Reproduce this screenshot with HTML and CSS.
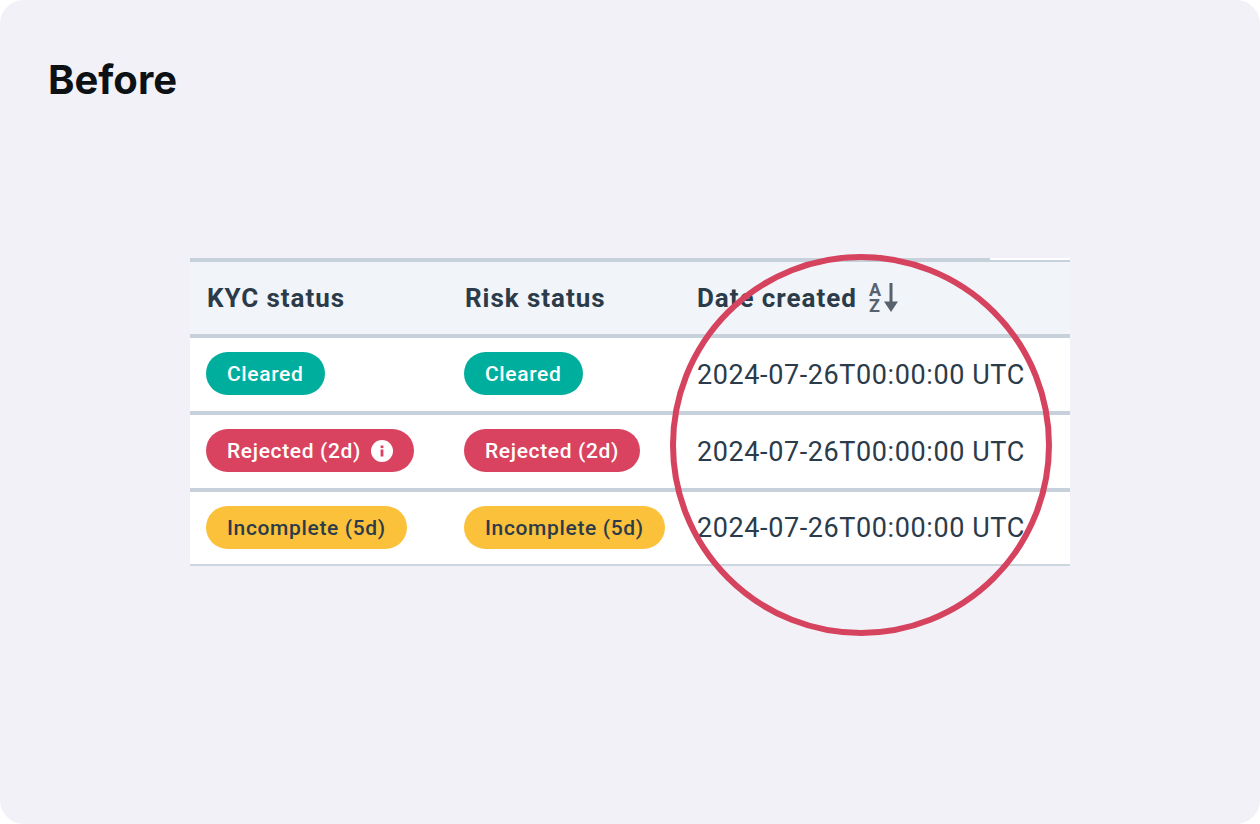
FILE: index.html
```html
<!DOCTYPE html>
<html lang="en">
<head>
<meta charset="utf-8">
<title>Before</title>
<link rel="stylesheet" href="styles.css">
</head>
<body>
<main class="card">
  <h1 class="title">Before</h1>
  <div class="figure">
    <table class="table">
      <thead>
        <tr>
          <th class="col-kyc">KYC status</th>
          <th class="col-risk">Risk status</th>
          <th class="col-date"><span class="th-inner">Date created
            <svg class="sort" width="31" height="32" viewBox="0 0 31 32" aria-hidden="true">
              <text x="0" y="14" class="sort-letter">A</text>
              <text x="0" y="30" class="sort-letter">Z</text>
              <path d="M22 1V21" class="sort-line"/>
              <path d="M15 19.5H29L22 30Z" class="sort-head"/>
            </svg></span></th>
        </tr>
      </thead>
      <tbody>
        <tr>
          <td><span class="pill green">Cleared</span></td>
          <td><span class="pill green">Cleared</span></td>
          <td class="date">2024-07-26T00:00:00 UTC</td>
        </tr>
        <tr>
          <td><span class="pill red">Rejected (2d)
            <svg class="info" width="22" height="22" viewBox="0 0 22 22" aria-hidden="true">
              <circle cx="11" cy="11" r="11" fill="#fff"/>
              <rect x="9.6" y="9.5" width="2.8" height="7" fill="#d9435f"/>
              <rect x="9.6" y="5.5" width="2.8" height="2.6" fill="#d9435f"/>
            </svg></span></td>
          <td><span class="pill red">Rejected (2d)</span></td>
          <td class="date">2024-07-26T00:00:00 UTC</td>
        </tr>
        <tr>
          <td><span class="pill yellow">Incomplete (5d)</span></td>
          <td><span class="pill yellow">Incomplete (5d)</span></td>
          <td class="date">2024-07-26T00:00:00 UTC</td>
        </tr>
      </tbody>
    </table>
    <div class="notch"></div>
    <div class="ring"></div>
  </div>
</main>
</body>
</html>
```

FILE: styles.css
```css
* { box-sizing: border-box; }
html, body { margin: 0; padding: 0; background: #fff; }
body { width: 1260px; height: 824px; overflow: hidden; }
.card {
  width: 1260px;
  height: 824px;
  background: #f1f1f7;
  border-radius: 24px;
  padding: 55px 190px 0 48px;
}
.title {
  margin: 0;
  font: 700 40px/50px Inter, "Liberation Sans", sans-serif;
  letter-spacing: 0;
  color: #0e1114;
}
.figure {
  position: relative;
  width: 880px;
  margin: 153px 0 0 142px;
}
.table {
  width: 880px;
  table-layout: fixed;
  border-collapse: separate;
  border-spacing: 0;
  font-family: Roboto, "Liberation Sans", sans-serif;
  color: #2b3b4a;
  background: #fff;
}
.table th {
  height: 80px;
  padding: 0 0 0 17px;
  text-align: left;
  background: #f1f4f8;
  border-top: 4px solid #c6d1db;
  border-bottom: 4px solid #c6d1db;
  font-size: 26px;
  font-weight: 700;
  letter-spacing: 0.95px;
  white-space: nowrap;
}
.col-kyc { width: 258px; }
.col-risk { width: 232px; }
.th-inner { display: inline-flex; align-items: center; gap: 12px; }
.sort { flex: none; overflow: visible; }
.sort-letter { font: 700 18px Roboto, "Liberation Sans", sans-serif; letter-spacing: 0; fill: #56636f; }
.sort-line { stroke: #56636f; stroke-width: 3; fill: none; }
.sort-head { fill: #56636f; }
.table td {
  height: 77px;
  padding: 0 0 2px 16px;
  border-bottom: 4px solid #c6d1db;
}
.table tr:last-child td {
  height: 74px;
  padding-bottom: 1px;
  border-bottom: 2px solid #cdd6df;
}
.table td.date {
  padding-left: 17px;
  padding-bottom: 0;
  font-size: 27px;
  letter-spacing: 0.6px;
  color: #2b3b4a;
  white-space: nowrap;
}
.pill {
  display: inline-flex;
  align-items: center;
  gap: 10px;
  height: 43px;
  padding: 0 21px;
  border-radius: 22px;
  font-size: 21px;
  font-weight: 500;
  letter-spacing: 0.65px;
  white-space: nowrap;
  vertical-align: middle;
}
.green { background: #00ae9e; color: #fff; }
.red { background: #d9435f; color: #fff; }
.yellow { background: #fcc13a; color: #2b3b4a; }
.notch {
  position: absolute;
  top: 0;
  right: 0;
  width: 80px;
  height: 2px;
  background: #fff;
}
.ring {
  position: absolute;
  left: 480px;
  top: -4px;
  width: 382px;
  height: 382px;
  border: 6px solid #d5435f;
  border-radius: 50%;
}
```
